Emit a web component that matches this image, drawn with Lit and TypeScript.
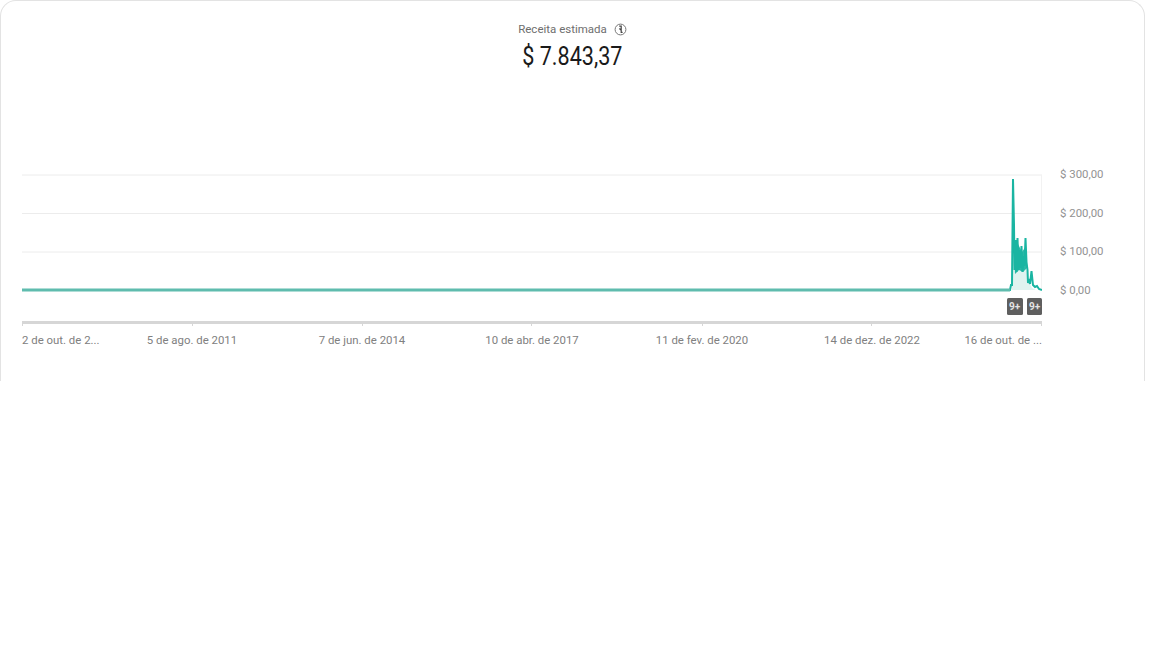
import { LitElement, html, css, svg } from "lit";
import { customElement } from "lit/decorators.js";

const line: [number, number][] = [
  [0,290],[988,290],[989,285],[990,285],[991,179],[992,225],[992.5,270],[993.5,240],[994.5,272],[995.5,238],[996.5,270],[997.5,250],[998.5,268],
  [999.5,246],[1000.5,272],[1001.5,256],[1002.5,266],[1003.5,238],[1004.5,262],[1005.5,270],[1006,283],[1007,279],[1008,284],[1009.5,271],[1011,285],[1013,287],[1015,286],[1017,289],[1020,290],
];
const pts = line.map((p) => p.join(",")).join(" ");
const under = "990,290 991,262 994,258 997,252 1000,256 1003,262 1006,280 1010,288 1014,290";
const band = "992,250 996,244 1000,252 1004,246 1005,268 1001,272 997,270 993,274";

@customElement("app-root")
export class AppRoot extends LitElement {
  static styles = css`
    :host { display: block; width: 1174px; height: 661px; background: #fff; font-family: Roboto, "Liberation Sans", sans-serif; overflow: hidden; }
    .card { box-sizing: border-box; width: 1145px; height: 381px; border: 1px solid #e3e3e3; border-bottom: 0; border-radius: 16px 16px 0 0; padding: 21px 0 0 21px; display: flex; flex-direction: column; }
    .head { display: flex; flex-direction: column; align-items: center; width: 1101px; }
    .title { display: flex; align-items: center; gap: 7px; font-size: 11.5px; line-height: 14px; color: #6e6e6e; }
    .title svg { display: block; }
    .value { font-size: 26px; line-height: 30px; margin-top: 5px; color: #1a1a1a; transform: scaleX(0.83); }
    .chart { display: grid; grid-template-columns: 1020px auto; column-gap: 18px; margin-top: 103px; }
    .plot { display: block; }
    .yaxis { display: flex; flex-direction: column; justify-content: space-between; height: 130px; font-size: 11.4px; line-height: 14px; color: #929292; margin-top: -7px; }
    .xaxis { grid-column: 1; display: flex; font-size: 11.4px; line-height: 14px; color: #808080; margin-top: 4px; white-space: nowrap; }
    .tick { flex: 0 0 170px; text-align: center; }
    .end { flex: 0 0 85px; }
    .end.right { display: flex; justify-content: flex-end; }
  `;
  render() {
    return html`<div class="card">
      <div class="head">
        <div class="title">
          <span>Receita estimada</span>
          <svg width="13" height="13" viewBox="0 0 13 13" fill="none">
            <circle cx="6.5" cy="6.5" r="5.4" stroke="#777" stroke-width="1"></circle>
            <path d="M5.2 3.2 L7.2 3.2 L7.2 9.4 L8.6 9.4 M5.4 5.5 L7 7" stroke="#444" stroke-width="1.2"></path>
          </svg>
        </div>
        <div class="value">$ 7.843,37</div>
      </div>
      <div class="chart">
        <svg class="plot" width="1020" height="155" viewBox="0 174 1020 155">
          ${[175, 213.5, 252].map((y) => svg`<line x1="0" x2="1020" y1=${y} y2=${y} stroke="#ececec"></line>`)}
          <line x1="1019.5" x2="1019.5" y1="175" y2="290" stroke="#f2f2f2"></line>
          <polygon points=${under} fill="#dff3f0"></polygon>
          <polygon points=${band} fill="#2bb8a6"></polygon>
          <polyline points=${pts} fill="none" stroke="#1ab5a2" stroke-width="2"></polyline>
          <line x1="0" x2="988" y1="290" y2="290" stroke="#5fbcae" stroke-width="3"></line>
          ${[985, 1005].map((x) => svg`
            <rect x=${x} y="298" width=${x === 985 ? 16 : 15} height="17" rx="1.5" fill="#5f5f5f"></rect>
            <text x=${x + 7.5} y="310" text-anchor="middle" font-size="10" font-weight="700" fill="#e4e4e4">9+</text>`)}
          <rect x="0" y="321" width="1020" height="3" fill="#d6d6d6"></rect>
          ${[0, 170, 340, 509, 680, 849, 1019].map((x) => svg`<line x1=${x + 0.5} x2=${x + 0.5} y1="321" y2="326" stroke="#d6d6d6"></line>`)}
        </svg>
        <div class="yaxis">
          <span>$ 300,00</span><span>$ 200,00</span><span>$ 100,00</span><span>$ 0,00</span>
        </div>
        <div class="xaxis">
          <span class="end">2 de out. de 2...</span>
          <span class="tick">5 de ago. de 2011</span>
          <span class="tick">7 de jun. de 2014</span>
          <span class="tick">10 de abr. de 2017</span>
          <span class="tick">11 de fev. de 2020</span>
          <span class="tick">14 de dez. de 2022</span>
          <span class="end right">16 de out. de ...</span>
        </div>
      </div>
    </div>`;
  }
}
